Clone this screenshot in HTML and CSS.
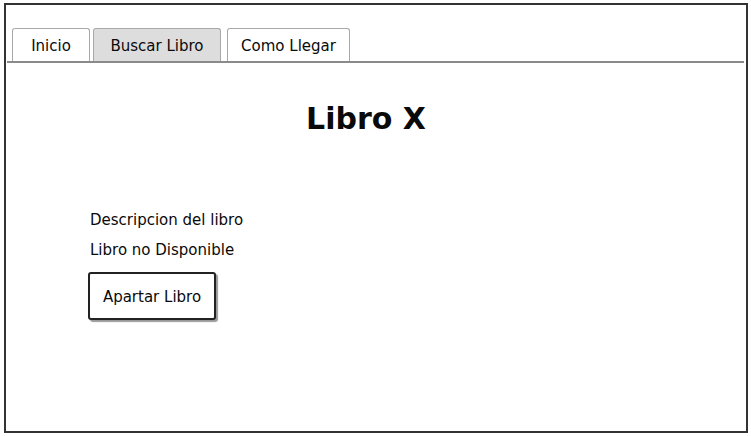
FILE: index.html
```html
<!DOCTYPE html>
<html>
<head>
<meta charset="utf-8">
<link rel="stylesheet" href="styles.css">
</head>
<body>
<div class="frame">
  <nav class="tabbar">
    <div class="tab tab-inicio">Inicio</div>
    <div class="tab tab-buscar active">Buscar Libro</div>
    <div class="tab tab-como">Como Llegar</div>
  </nav>
  <h1 class="title">Libro X</h1>
  <section class="content">
    <p class="line">Descripcion del libro</p>
    <p class="line">Libro no Disponible</p>
    <button class="btn">Apartar Libro</button>
  </section>
</div>
</body>
</html>
```
FILE: styles.css
```css
* { box-sizing: border-box; }
html, body { margin: 0; padding: 0; background: #fff; }
body {
  font-family: "DejaVu Sans", "Liberation Sans", sans-serif;
  color: #0a0a0a;
  width: 751px;
  height: 436px;
  overflow: hidden;
}
.frame {
  margin: 3px 0 0 4px;
  width: 744px;
  height: 430px;
  border: 2px solid #333;
}
.tabbar {
  display: flex;
  align-items: flex-end;
  margin: 23px 2px 0 1px;
  padding-left: 5px;
  border-bottom: 2px solid #8a8a8a;
  height: 35px;
}
.tab {
  height: 33px;
  border: 1px solid #a8a8a8;
  border-bottom: none;
  border-radius: 3px 3px 0 0;
  background: #fff;
  display: flex;
  align-items: center;
  justify-content: center;
  font-size: 15px;
  padding-top: 2px;
}
.tab-inicio { width: 78px; }
.tab-buscar { width: 128px; margin-left: 3px; }
.tab-como { width: 123px; margin-left: 6px; }
.tab.active { background: #dddddd; }
.title {
  margin: 0;
  padding: 36px 20px 0 0;
  text-align: center;
  font-size: 30px;
  line-height: 40px;
  font-weight: bold;
}
.content {
  padding: 71px 0 0 84px;
}
.line {
  margin: 0 0 10px 0;
  font-size: 15px;
  line-height: 20px;
}
.btn {
  margin-top: 2px;
  margin-left: -2px;
  width: 128px;
  height: 48px;
  border: 2px solid #222;
  border-radius: 3px;
  background: #fff;
  box-shadow: 2px 2px 1px #999;
  font-family: inherit;
  font-size: 15px;
  color: #0a0a0a;
  padding: 2px 0 0 0;
}
```
